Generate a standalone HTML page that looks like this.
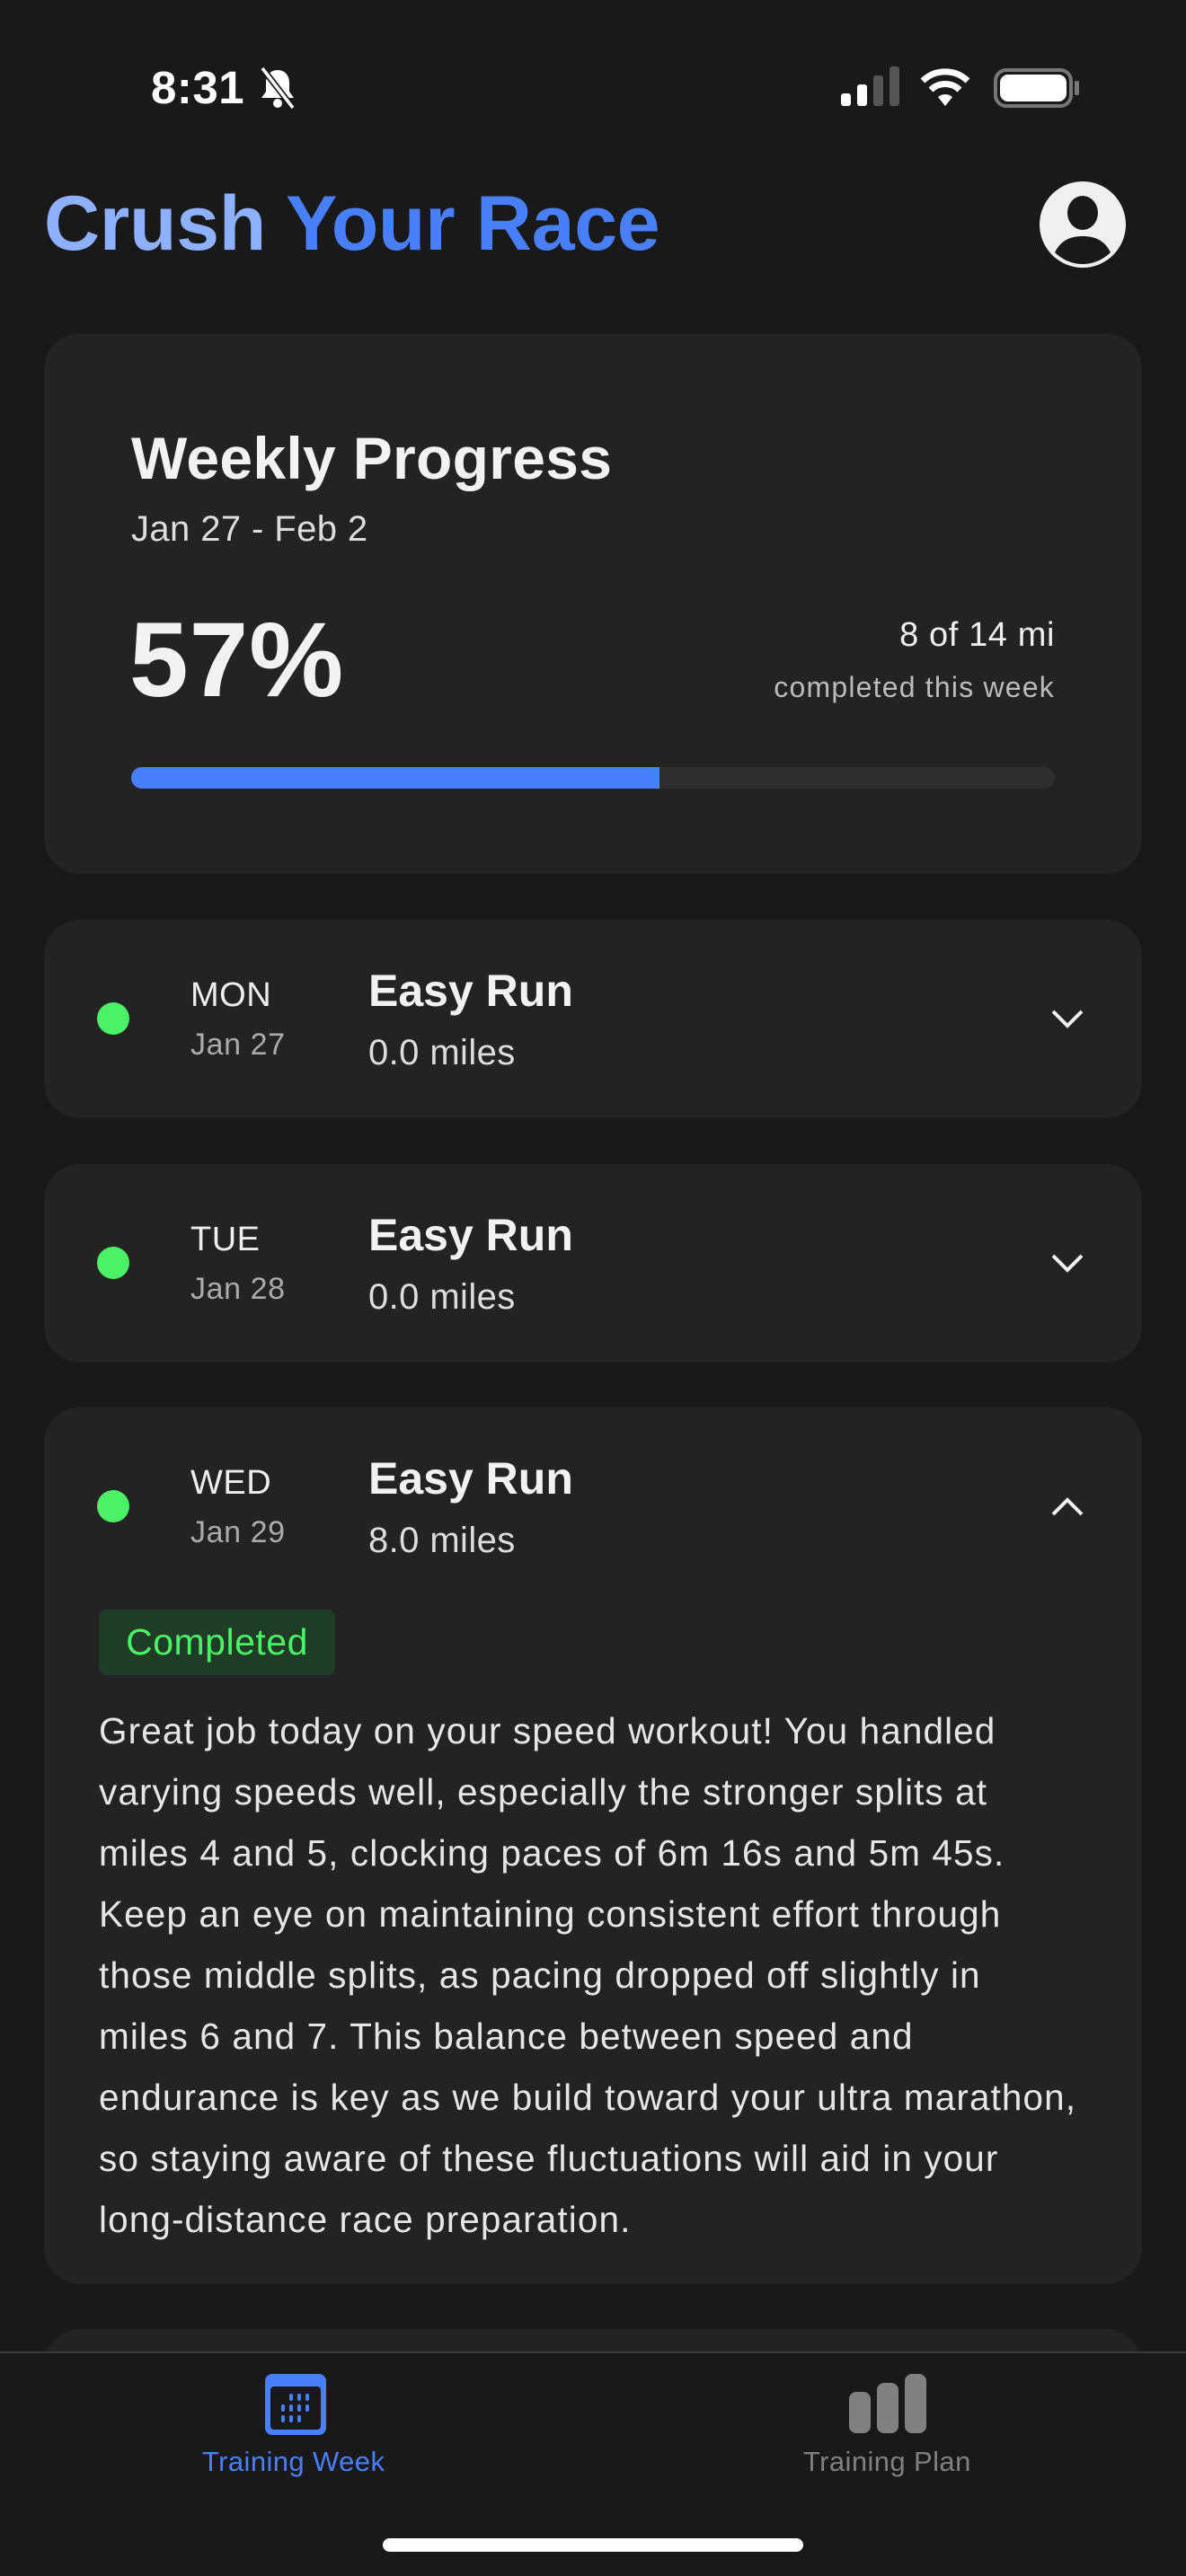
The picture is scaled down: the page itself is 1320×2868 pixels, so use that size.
<!DOCTYPE html>
<html><head><meta charset="utf-8"><style>
*{margin:0;padding:0;box-sizing:border-box}
body{width:1320px;height:2868px;background:#191919;font-family:"Liberation Sans",sans-serif;color:#f2f2f2;position:relative;overflow:hidden}
.a{position:absolute}
.card{position:absolute;left:49px;width:1222px;background:#232323;border-radius:40px}
.dot{position:absolute;left:108px;width:36px;height:36px;border-radius:50%;background:#4cf266}
.dow{position:absolute;left:212px;font-size:38px;color:#eee;letter-spacing:.5px}
.dt{position:absolute;left:212px;font-size:34px;color:#aaa;letter-spacing:.6px}
.ttl{position:absolute;left:410px;font-size:50px;font-weight:bold;color:#f2f2f2}
.mi{position:absolute;left:410px;font-size:40px;color:#ddd;letter-spacing:.4px}
.chev{position:absolute;left:1168px}
</style></head><body>
<div class="a" style="left:168px;top:68px;font-size:51px;font-weight:bold;color:#fff;letter-spacing:.5px">8:31</div>
<svg class="a" style="left:286px;top:74px" width="46" height="48" viewBox="0 0 46 48"><path d="M23 4c-8 0-13 6-13 14v10l-5 7h36l-5-7V18c0-8-5-14-13-14z" fill="#fff"/><circle cx="23" cy="41" r="5" fill="#fff"/><path d="M6 2l34 44" stroke="#191919" stroke-width="7"/><path d="M6 2l34 44" stroke="#fff" stroke-width="3.5"/></svg>
<div class="a" style="left:936px;top:104px;width:11px;height:14px;background:#fff;border-radius:3px"></div>
<div class="a" style="left:954px;top:94px;width:11px;height:24px;background:#fff;border-radius:3px"></div>
<div class="a" style="left:972px;top:84px;width:11px;height:34px;background:#555;border-radius:3px"></div>
<div class="a" style="left:990px;top:74px;width:11px;height:44px;background:#555;border-radius:3px"></div>
<svg class="a" style="left:1022px;top:72px" width="60" height="48" viewBox="0 0 60 48"><path d="M30 46L22 36a12 12 0 0 1 16 0z" fill="#fff"/><path d="M14 28a23 23 0 0 1 32 0" stroke="#fff" stroke-width="7" fill="none"/><path d="M5 18a36 36 0 0 1 50 0" stroke="#fff" stroke-width="7" fill="none"/></svg>
<div class="a" style="left:1106px;top:76px;width:88px;height:44px;border:4px solid #777;border-radius:14px"></div>
<div class="a" style="left:1113px;top:83px;width:74px;height:30px;background:#fff;border-radius:9px"></div>
<div class="a" style="left:1196px;top:90px;width:5px;height:16px;background:#777;border-radius:2px"></div>
<div class="a" style="left:49px;top:200px;font-size:86px;font-weight:bold;letter-spacing:-0.3px;white-space:nowrap"><span style="color:#8eb1ff">Crush</span> <span style="color:#4880fc">Your Race</span></div>
<svg class="a" style="left:1157px;top:202px" width="96" height="96" viewBox="0 0 96 96"><circle cx="48" cy="48" r="48" fill="#f0f0f0"/><ellipse cx="48" cy="35" rx="17" ry="19" fill="#191919"/><path d="M17 79c7-14 18-18 31-18s24 4 31 18c-8 8-19 13-31 13s-23-5-31-13z" fill="#191919"/></svg>

<div class="card" style="top:371px;height:602px"></div>
<div class="a" style="left:146px;top:472px;font-size:66px;font-weight:bold;color:#f2f2f2;letter-spacing:.3px">Weekly Progress</div>
<div class="a" style="left:146px;top:567px;font-size:40px;color:#ddd;letter-spacing:.4px">Jan 27 - Feb 2</div>
<div class="a" style="left:144px;top:667px;font-size:118px;font-weight:bold;letter-spacing:1px">57%</div>
<div class="a" style="right:146px;top:686px;font-size:38px;color:#eee;letter-spacing:.6px">8 of 14 mi</div>
<div class="a" style="right:146px;top:747px;font-size:32px;color:#bbb;letter-spacing:1.2px">completed this week</div>
<div class="a" style="left:146px;top:854px;width:1028px;height:24px;background:#2e2e2e;border-radius:12px"></div>
<div class="a" style="left:146px;top:854px;width:588px;height:24px;background:#4880fc;border-radius:12px 0 0 12px"></div>

<div class="card" style="top:1024px;height:221px"></div>
<div class="dot" style="top:1116px"></div>
<div class="dow" style="top:1087px">MON</div><div class="dt" style="top:1144px">Jan 27</div>
<div class="ttl" style="top:1074px">Easy Run</div><div class="mi" style="top:1150px">0.0 miles</div>
<svg class="chev" style="top:1120px" width="40" height="28" viewBox="0 0 40 28"><path d="M4 6l16 16 16-16" stroke="#eee" stroke-width="4" fill="none"/></svg>

<div class="card" style="top:1296px;height:221px"></div>
<div class="dot" style="top:1388px"></div>
<div class="dow" style="top:1359px">TUE</div><div class="dt" style="top:1416px">Jan 28</div>
<div class="ttl" style="top:1346px">Easy Run</div><div class="mi" style="top:1422px">0.0 miles</div>
<svg class="chev" style="top:1392px" width="40" height="28" viewBox="0 0 40 28"><path d="M4 6l16 16 16-16" stroke="#eee" stroke-width="4" fill="none"/></svg>

<div class="card" style="top:1567px;height:976px"></div>
<div class="dot" style="top:1659px"></div>
<div class="dow" style="top:1630px">WED</div><div class="dt" style="top:1687px">Jan 29</div>
<div class="ttl" style="top:1617px">Easy Run</div><div class="mi" style="top:1693px">8.0 miles</div>
<svg class="chev" style="top:1664px" width="40" height="28" viewBox="0 0 40 28"><path d="M4 22L20 6l16 16" stroke="#eee" stroke-width="4" fill="none"/></svg>
<div class="a" style="left:110px;top:1792px;width:263px;height:73px;background:#1f3d26;border-radius:8px;color:#4cf266;font-size:41px;line-height:73px;text-align:center;letter-spacing:.5px">Completed</div>
<div class="a" style="left:110px;top:1893px;font-size:40.5px;line-height:68px;color:#e6e6e6;letter-spacing:1.1px;white-space:nowrap">Great job today on your speed workout! You handled<br>varying speeds well, especially the stronger splits at<br>miles 4 and 5, clocking paces of 6m 16s and 5m 45s.<br>Keep an eye on maintaining consistent effort through<br>those middle splits, as pacing dropped off slightly in<br>miles 6 and 7. This balance between speed and<br>endurance is key as we build toward your ultra marathon,<br>so staying aware of these fluctuations will aid in your<br>long-distance race preparation.</div>

<div class="card" style="top:2593px;height:200px"></div>
<div class="a" style="left:0;top:2618px;width:1320px;height:250px;background:#191919;border-top:2px solid #3a3a3a"></div>
<svg class="a" style="left:295px;top:2643px" width="68" height="68" viewBox="0 0 68 68"><rect x="0" y="0" width="68" height="68" rx="8" fill="#4880fc"/><rect x="6" y="14" width="56" height="48" rx="4" fill="#191919"/><g fill="#4880fc"><rect x="27" y="22" width="4" height="8" rx="2"/><rect x="36" y="22" width="4" height="8" rx="2"/><rect x="45" y="22" width="4" height="8" rx="2"/><rect x="18" y="34" width="4" height="8" rx="2"/><rect x="27" y="34" width="4" height="8" rx="2"/><rect x="36" y="34" width="4" height="8" rx="2"/><rect x="45" y="34" width="4" height="8" rx="2"/><rect x="18" y="46" width="4" height="8" rx="2"/><rect x="27" y="46" width="4" height="8" rx="2"/><rect x="36" y="46" width="4" height="8" rx="2"/></g></svg>
<div class="a" style="left:225px;top:2723px;font-size:31px;color:#4880fc;letter-spacing:.4px">Training Week</div>
<svg class="a" style="left:945px;top:2643px" width="90" height="66" viewBox="0 0 90 66"><rect x="0" y="20" width="24" height="46" rx="8" fill="#808080"/><rect x="31" y="10" width="24" height="56" rx="8" fill="#808080"/><rect x="62" y="0" width="24" height="66" rx="8" fill="#808080"/></svg>
<div class="a" style="left:894px;top:2723px;font-size:31px;color:#808080;letter-spacing:.4px">Training Plan</div>
<div class="a" style="left:426px;top:2826px;width:468px;height:15px;background:#fff;border-radius:8px"></div>
</body></html>
